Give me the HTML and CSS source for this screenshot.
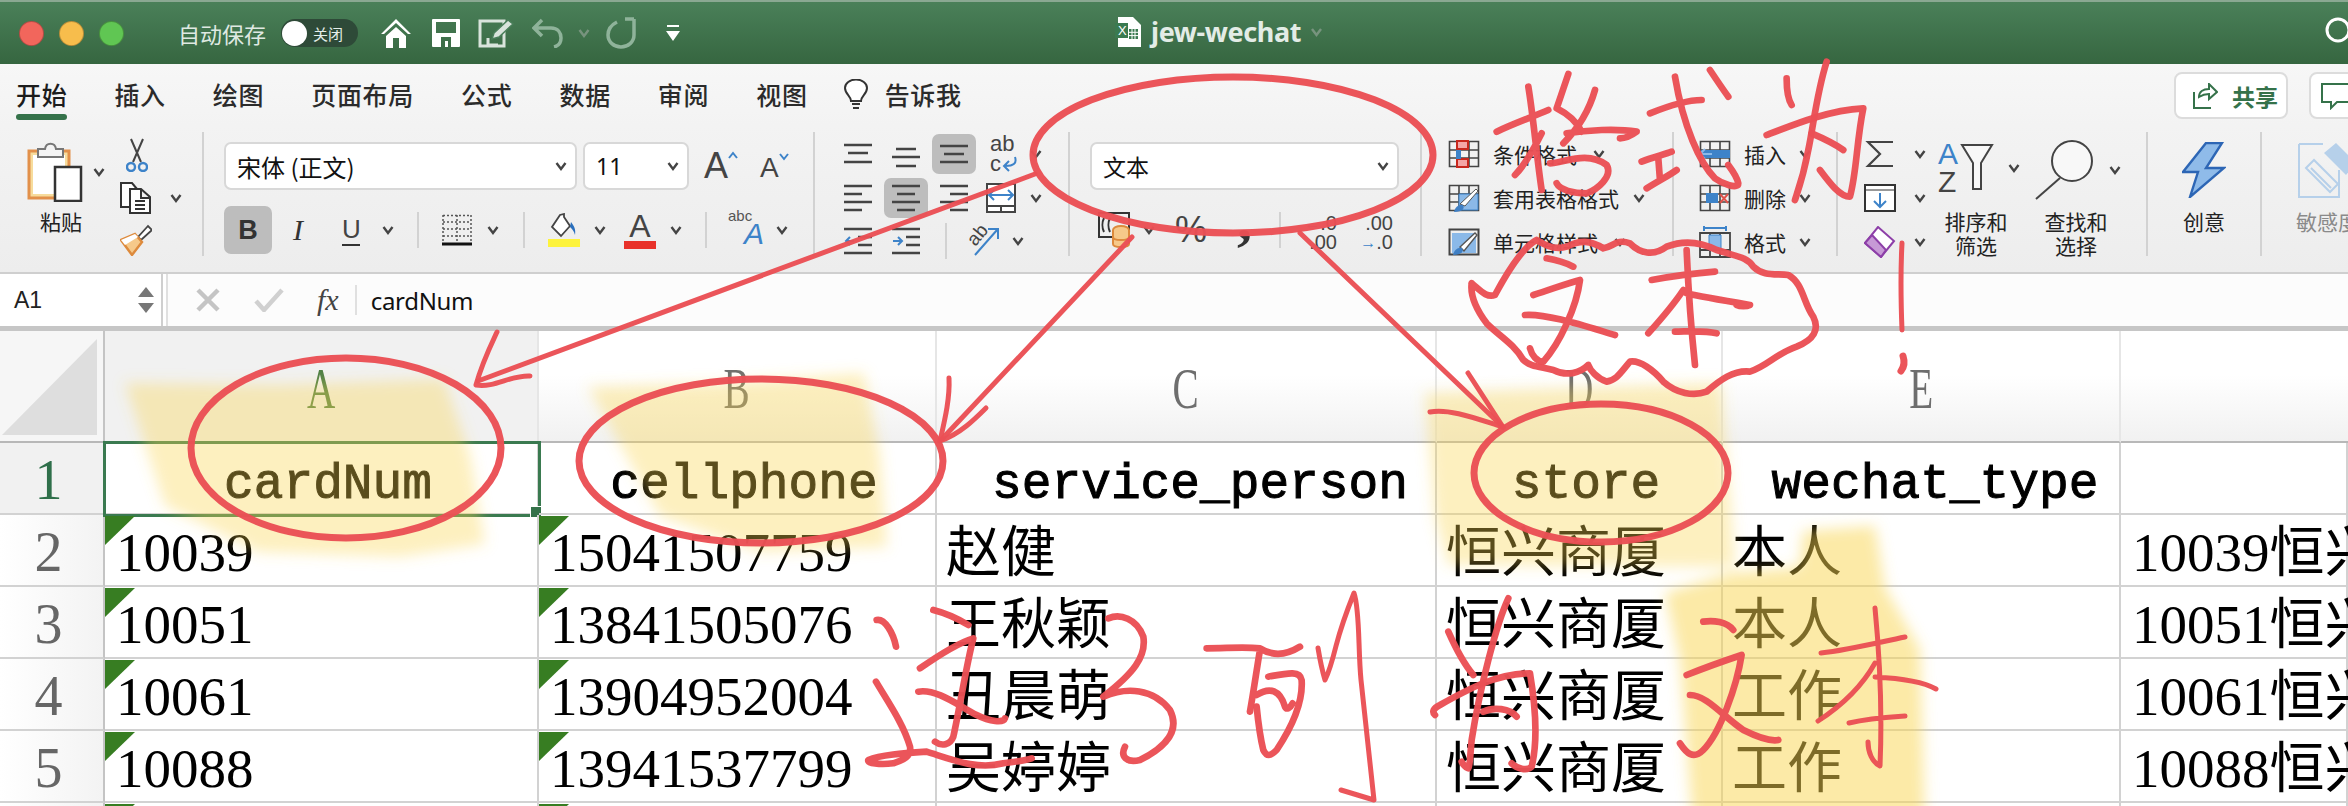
FILE: index.html
```html
<!DOCTYPE html>
<html lang="zh-CN">

<head>
    <meta charset="UTF-8">
    <title>jew-wechat</title>
    <link rel="stylesheet" href="styles.css">
</head>

<body>
    <svg class="defs" width="0" height="0">
        <symbol id="chev" viewBox="0 0 12 10"><path d="M1.5 2 6 8l4.5-6" fill="none" stroke="#444" stroke-width="2.4" /></symbol>
        <symbol id="tbl" viewBox="0 0 32 28">
            <path d="M1.5 1.5h29v25h-29zM1.5 10h29M1.5 18h29M11 1.5v25M21 1.5v25" fill="none" stroke="#444" stroke-width="1.6" />
        </symbol>
        <symbol id="brush" viewBox="0 0 32 28">
            <path d="M1.5 1.5h29v25h-29z" fill="none" stroke="#444" stroke-width="2" />
            <path d="M4 5h24v20H4z" fill="#8bb9e8" />
            <path d="M12 19 27 5l2 2-13 16z" fill="#fff" stroke="#555" stroke-width="1.4" />
            <path d="M5 27c1-5 5-8 9-7 2 3 0 7-9 7z" fill="#3f7fc4" />
        </symbol>
    </svg>

    <header class="titlebar">
        <div class="lights">
            <span class="light red"></span>
            <span class="light amber"></span>
            <span class="light green"></span>
        </div>
        <span class="autosave">自动保存</span>
        <div class="toggle"><span class="knob"></span><span>关闭</span></div>
        <svg class="m22" width="32" height="30" viewBox="0 0 32 30"><path d="M16 1 1 16h3l12-11 12 11h3zM6 18l10-9 10 9v12h-7V20h-6v10H6z" fill="#fff" /></svg>
        <svg class="m20" width="28" height="28" viewBox="0 0 28 28"><path d="M1 0h26a1 1 0 0 1 1 1v26a1 1 0 0 1-1 1H1a1 1 0 0 1-1-1V1a1 1 0 0 1 1-1zm3 3v11h20V3zm5 15v10h10V18zm4 4h3v6h-3z" fill="#fff" fill-rule="evenodd" /></svg>
        <svg class="m18" width="36" height="30" viewBox="0 0 36 30"><path d="M2 3h24v25H2z" fill="none" stroke="#d9e4dc" stroke-width="3" /><path d="M10 20v7h10" fill="none" stroke="#d9e4dc" stroke-width="3" /><path d="m14 21 2-6L30 2l5 4-14 13z" fill="#d9e4dc" stroke="#4a7f5a" stroke-width="1.5" /></svg>
        <svg class="m18" width="32" height="30" viewBox="0 0 32 30"><path d="M10 2 2 10l8 8M3 10h16c7 0 10 5 10 10s-3 8-7 9" fill="none" stroke="#8fb39a" stroke-width="3.5" /></svg>
        <svg class="chev-faded m14" width="12" height="10"><use href="#chev" /></svg>
        <svg class="m16" width="32" height="32" viewBox="0 0 32 32"><path d="M11 5C5 8 2 13 2 18c0 7 6 12 13 12s13-5 13-12V2M28 2h-9" fill="none" stroke="#8fb39a" stroke-width="3.5" /></svg>
        <svg class="m28" width="14" height="20" viewBox="0 0 14 20"><path d="M1 2h12v2H1zM0 8h14l-7 10z" fill="#fff" /></svg>

        <div class="doc-title">
            <svg width="26" height="30" viewBox="0 0 26 30"><path d="M3 0h15l8 8v22H3z" fill="#fff" /><path d="M0 6h13v15H0z" fill="#3a7a50" /><path d="M14 12h9v10h-9z" fill="#3a7a50" /><path d="M17 12v10M20 12v10M14 15.300h9M14 18.600h9" stroke="#fff" /><text class="doc-x" x="3" y="18">X</text></svg>
            <span class="doc-name">jew-wechat</span>
            <svg class="chev-faded" width="15" height="10"><use href="#chev" /></svg>
        </div>
        <svg class="title-search" width="24" height="30" viewBox="0 0 24 30"><circle cx="14" cy="13" r="11" fill="none" stroke="#fff" stroke-width="3" /></svg>
    </header>

    <nav class="tabs">
        <span class="tab active">开始</span>
        <span class="tab">插入</span>
        <span class="tab">绘图</span>
        <span class="tab">页面布局</span>
        <span class="tab">公式</span>
        <span class="tab">数据</span>
        <span class="tab">审阅</span>
        <span class="tab">视图</span>
        <div class="tell">
            <svg width="26" height="32" viewBox="0 0 26 32"><path d="M8 22c0-5-6-7-6-13a11 8.500 0 0 1 22 0c0 6-6 8-6 13zM9 25h8M10 29h6" fill="#fff" stroke="#333" stroke-width="2" /></svg>
            <span class="tab">告诉我</span>
        </div>
        <div class="share-btns">
            <button class="share">
                <svg width="26" height="26" viewBox="0 0 26 26"><path d="M7 14c0-5 4-8 10-8V1l8 8-8 7v-5c-4 0-7 1-10 3zM2 9v16h17" fill="none" stroke="#35724a" stroke-width="2" /></svg>
                <span>共享</span>
            </button>
            <button class="comment">
                <svg width="32" height="28" viewBox="0 0 32 28"><path d="M1 2h30v18H16l-6 6v-6H1z" fill="none" stroke="#35724a" stroke-width="2" /></svg>
            </button>
        </div>
    </nav>

    <section class="ribbon">
        <div class="group clipboard">
            <div class="big paste">
                <div class="big-icon">
                    <svg width="56" height="60" viewBox="0 0 56 60">
                        <path d="M2 9h40v47H2z" fill="#f7dc9c" stroke="#e2904a" stroke-width="3" />
                        <path d="M6 13h32v39H6z" fill="#fff" />
                        <path d="M11 15V7h7c1-7 10-7 11 0h7v8z" fill="#f4f4f4" stroke="#777" stroke-width="2" />
                        <path d="M28 25h26v34H28z" fill="#fff" stroke="#333" stroke-width="2.500" />
                    </svg>
                    <svg class="m10" width="12" height="10"><use href="#chev" /></svg>
                </div>
                <span class="big-label">粘贴</span>
            </div>
            <div class="clip-tools">
                <svg class="m6" width="22" height="34" viewBox="0 0 22 34"><path d="m5 1 10 23M17 1 7 24" stroke="#444" stroke-width="2" fill="none" /><circle cx="5" cy="29" r="4" fill="none" stroke="#3d83c9" stroke-width="2.400" /><circle cx="17" cy="29" r="4" fill="none" stroke="#3d83c9" stroke-width="2.400" /></svg>
                <div class="tool-row">
                    <svg width="32" height="32" viewBox="0 0 32 32"><path d="M9 25H1V1h11l5 6M10 7h11l9 8v16H10zM21 8v8h9M15 19h10M15 23h10M15 27h10" fill="#fff" stroke="#333" stroke-width="2" /></svg>
                    <svg class="m18" width="12" height="10"><use href="#chev" /></svg>
                </div>
                <svg width="32" height="32" viewBox="0 0 32 32"><path d="M18 13 28 2l4 4-11 10z" fill="#fff" stroke="#444" stroke-width="1.800" /><path d="M15 10 22 18 12 31 1 16z" fill="#f6c98a" stroke="#dd8a3c" stroke-width="2.400" /><path d="M1 16 15 10l3 3-13 8z" fill="#fff" /></svg>
            </div>
        </div>

        <div class="group font">
            <div class="row top">
                <div class="select font-name"><span>宋体 (正文)</span><svg width="12" height="10"><use href="#chev" /></svg></div>
                <div class="select font-size"><span>11</span><svg width="12" height="10"><use href="#chev" /></svg></div>
                <div class="grow-a m15"><span>A</span><svg width="10" height="8" viewBox="0 0 10 8"><path d="m1 7 4-5 4 5" fill="none" stroke="#3d83c9" stroke-width="2" /></svg></div>
                <div class="shrink-a m22"><span>A</span><svg width="10" height="8" viewBox="0 0 10 8"><path d="m1 1 4 5 4-5" fill="none" stroke="#3d83c9" stroke-width="2" /></svg></div>
            </div>
            <div class="row bottom">
                <div class="pressed bold">B</div>
                <span class="fmt-i m21">I</span>
                <span class="fmt-u m35">U</span>
                <svg class="m22" width="12" height="10"><use href="#chev" /></svg>
                <i class="vsep m23"></i>
                <svg class="m23" width="30" height="32" viewBox="0 0 30 32"><path d="M1 1.500h28M1 8h28M1 15h28M1 22h28M1 1v26M15 1v26M29 1v26" fill="none" stroke="#555" stroke-width="1.500" stroke-dasharray="2 2" /><path d="M0 30h30" stroke="#111" stroke-width="3" /></svg>
                <svg class="m15" width="12" height="10"><use href="#chev" /></svg>
                <i class="vsep m24"></i>
                <svg class="m23" width="32" height="34" viewBox="0 0 32 34"><path d="M12 2 4 14l9 9 9-10-6-9V1z" fill="#fff" stroke="#444" stroke-width="1.800" /><path d="M23 9c3 4 5 7 4 13-1-4-3-6-5-8z" fill="#2a6fbd" /><path d="M0 26h32v8H0z" fill="#fdf33c" /></svg>
                <svg class="m14" width="12" height="10"><use href="#chev" /></svg>
                <div class="color-a m18"><span>A</span><i></i></div>
                <svg class="m14" width="12" height="10"><use href="#chev" /></svg>
                <i class="vsep m23"></i>
                <div class="abc m23"><span class="abc-small">abc</span><span class="abc-big">A</span></div>
                <svg class="m16" width="12" height="10"><use href="#chev" /></svg>
            </div>
        </div>

        <div class="group align">
            <div class="align-row one">
                <svg width="28" height="22" viewBox="0 0 28 22"><path d="M0 2h28M4 10h20M0 19h28" stroke="#444" stroke-width="2.400" /></svg>
                <svg class="m20 low8" width="28" height="22" viewBox="0 0 28 22"><path d="M4 2h20M0 10h28M4 19h20" stroke="#444" stroke-width="2.400" /></svg>
                <div class="pressed align-on m12"><svg width="28" height="20" viewBox="0 0 28 20"><path d="M0 2h28M4 10h20M0 18h28" stroke="#444" stroke-width="2.400" /></svg></div>
                <div class="wrap-ab m14">
                    <span>ab</span>
                    <span class="wrap-c">c<svg width="16" height="16" viewBox="0 0 16 16"><path d="M14 1c2 6-1 9-10 9M8 5l-5 5 5 5" fill="none" stroke="#3d83c9" stroke-width="2" /></svg></span>
                </div>
                <svg class="m10" width="12" height="10"><use href="#chev" /></svg>
            </div>
            <div class="align-row two">
                <svg width="28" height="28" viewBox="0 0 28 28"><path d="M0 2h28M0 10h18M0 18h28M0 26h18" stroke="#444" stroke-width="2.400" /></svg>
                <div class="pressed align-on m12"><svg width="28" height="28" viewBox="0 0 28 28"><path d="M0 2h28M5 10h18M0 18h28M5 26h18" stroke="#444" stroke-width="2.400" /></svg></div>
                <svg class="m12" width="28" height="28" viewBox="0 0 28 28"><path d="M0 2h28M10 10h18M0 18h28M10 26h18" stroke="#444" stroke-width="2.400" /></svg>
                <svg class="m18" width="30" height="30" viewBox="0 0 30 30"><path d="M1 1h28v28H1zM1 23h28M15 23v6" fill="#fff" stroke="#444" stroke-width="2" /><path d="M3 12h24M8 7l-5 5 5 5M22 7l5 5-5 5" fill="none" stroke="#3d83c9" stroke-width="2" /></svg>
                <svg class="m14" width="12" height="10"><use href="#chev" /></svg>
            </div>
            <div class="align-row three">
                <svg width="28" height="28" viewBox="0 0 28 28"><path d="M0 2h28M14 10h14M14 18h14M0 26h28" stroke="#444" stroke-width="2.400" /><path d="M10 14H2M6 10l-4 4 4 4" fill="none" stroke="#3d83c9" stroke-width="2" /></svg>
                <svg class="m20" width="28" height="28" viewBox="0 0 28 28"><path d="M0 2h28M14 10h14M14 18h14M0 26h28" stroke="#444" stroke-width="2.400" /><path d="M1 14h9M6 10l4 4-4 4" fill="none" stroke="#3d83c9" stroke-width="2" /></svg>
                <i class="vsep m25"></i>
                <div class="orient m20"><span>ab</span><svg width="34" height="30" viewBox="0 0 34 30"><path d="M8 29 30 4M21 3h10v10" fill="none" stroke="#3d83c9" stroke-width="2" /></svg></div>
                <svg class="m11" width="12" height="10"><use href="#chev" /></svg>
            </div>
        </div>

        <div class="group number">
            <div class="row top">
                <div class="select num-format"><span>文本</span><svg width="12" height="10"><use href="#chev" /></svg></div>
            </div>
            <div class="row num-tools">
                <svg class="m8" width="34" height="36" viewBox="0 0 34 36"><path d="M1 1h30v24H1zM6 6c-2 4-2 10 0 14M12 6c-2 4-2 10 0 14" fill="none" stroke="#333" stroke-width="2" /><ellipse cx="23" cy="18" rx="8" ry="4" fill="#f6c98a" stroke="#dd8a3c" stroke-width="2" /><path d="M15 18v14c0 4 16 4 16 0V18M15 25c0 4 16 4 16 0" fill="#f6c98a" stroke="#dd8a3c" stroke-width="2" /></svg>
                <svg class="m11" width="12" height="10"><use href="#chev" /></svg>
                <span class="pct m20">%</span>
                <span class="comma">,</span>
                <i class="vsep"></i>
                <div class="dec-btn first"><span class="dec-top"><b>←</b>.0</span><span class="dec-side">.00</span></div>
                <div class="dec-btn"><span class="dec-side">.00</span><span class="dec-top"><b>→</b>.0</span></div>
            </div>
        </div>

        <div class="group styles">
            <div class="list-row">
                <svg width="32" height="28" viewBox="0 0 32 28"><use href="#tbl" /><path d="M9 1h11v8H9zM9 19h11v8H9z" fill="#f4a6a6" stroke="#c8281e" stroke-width="2" /><path d="M8 10h5v9H8z" fill="#3d83c9" /></svg>
                <span class="list-text">条件格式</span>
                <svg class="m15" width="14" height="10"><use href="#chev" /></svg>
            </div>
            <div class="list-row">
                <svg width="32" height="28" viewBox="0 0 32 28"><use href="#tbl" /><path d="M11 10h19v16H11z" fill="#8bb9e8" stroke="#3d83c9" /><path d="M12 20 28 5l2 2-13 15z" fill="#fff" stroke="#555" /><path d="M6 28c1-5 5-8 9-7 2 3 0 7-9 7z" fill="#3f7fc4" /></svg>
                <span class="list-text">套用表格格式</span>
                <svg class="m13" width="14" height="10"><use href="#chev" /></svg>
            </div>
            <div class="list-row">
                <svg width="32" height="28"><use href="#brush" /></svg>
                <span class="list-text">单元格样式</span>
                <svg class="m15" width="14" height="10"><use href="#chev" /></svg>
            </div>
        </div>

        <div class="group cells">
            <div class="list-row">
                <svg width="32" height="28" viewBox="0 0 32 28"><use href="#tbl" /><path d="M2 10h29v8H2z" fill="#3d83c9" /><path d="M13 14H2M6 9l-5 5 5 5" fill="none" stroke="#8bb9e8" stroke-width="2" /></svg>
                <span class="list-text">插入</span>
                <svg class="m13" width="12" height="10"><use href="#chev" /></svg>
            </div>
            <div class="list-row">
                <svg width="32" height="28" viewBox="0 0 32 28"><use href="#tbl" /><path d="M7 9h12v10H7z" fill="#3d83c9" /><path d="m21 10 8 9m0-9-8 9" stroke="#e0524a" stroke-width="2" /></svg>
                <span class="list-text">删除</span>
                <svg class="m13" width="12" height="10"><use href="#chev" /></svg>
            </div>
            <div class="list-row">
                <svg width="32" height="32" viewBox="0 0 32 32"><path d="M1 7h30v24H1zM1 24h30M11 7v24M21 7v24" fill="none" stroke="#444" stroke-width="1.800" /><path d="M10 9h12v15H10z" fill="#8bb9e8" stroke="#3d83c9" /><path d="M5 2h22M5 0v5M27 0v5" fill="none" stroke="#3d83c9" stroke-width="2" /></svg>
                <span class="list-text">格式</span>
                <svg class="m13" width="12" height="10"><use href="#chev" /></svg>
            </div>
        </div>

        <div class="group editing">
            <div class="edit-list">
                <div class="edit-row">
                    <svg width="32" height="28" viewBox="0 0 32 28"><path d="M29 2H4l12 12L4 26h25" fill="none" stroke="#444" stroke-width="2.200" /></svg>
                    <svg class="m18" width="12" height="10"><use href="#chev" /></svg>
                </div>
                <div class="edit-row">
                    <svg width="32" height="28" viewBox="0 0 32 28"><path d="M1 1h30v26H1z" fill="#fff" stroke="#333" stroke-width="2" /><path d="M1 6h30" stroke="#333" /><path d="M16 9v14M10 17l6 6 6-6" fill="none" stroke="#3d83c9" stroke-width="2" /></svg>
                    <svg class="m18" width="12" height="10"><use href="#chev" /></svg>
                </div>
                <div class="edit-row">
                    <svg width="32" height="32" viewBox="0 0 32 32"><path d="M14 1 30 15 17 31 1 17z" fill="#fff" stroke="#8d3fa8" stroke-width="2" /><path d="m8 9 14 15-5 7L1 17z" fill="#c79ad6" stroke="#8d3fa8" stroke-width="2" /></svg>
                    <svg class="m18" width="12" height="10"><use href="#chev" /></svg>
                </div>
            </div>
            <div class="big sort">
                <div class="big-icon">
                    <div class="sort-letters"><span class="sort-a">A</span><span>Z</span></div>
                    <svg width="34" height="50" viewBox="0 0 34 50"><path d="M2 2h30L21 20v26h-8V20z" fill="#f8f8f8" stroke="#444" stroke-width="2" /></svg>
                    <svg class="m14" width="12" height="10"><use href="#chev" /></svg>
                </div>
                <span class="big-label">排序和<br>筛选</span>
            </div>
            <div class="big find">
                <div class="big-icon">
                    <svg width="60" height="60" viewBox="0 0 60 60"><circle cx="37" cy="21" r="20" fill="#f8f8f8" stroke="#444" stroke-width="2" /><path d="M25 38 1 59" stroke="#444" stroke-width="2" /></svg>
                    <svg class="m14" width="12" height="10"><use href="#chev" /></svg>
                </div>
                <span class="big-label">查找和<br>选择</span>
            </div>
        </div>

        <div class="group ideas">
            <div class="big">
                <svg width="44" height="56" viewBox="0 0 44 56"><path d="M24 1h16L24 26h18L8 55l8-25H1z" fill="#8fbbe9" stroke="#2d66b5" stroke-width="2.400" /></svg>
                <span class="big-label">创意</span>
            </div>
        </div>

        <div class="group sensitivity">
            <div class="big">
                <svg width="60" height="56" viewBox="0 0 60 56"><path d="M1 2h24M1 2v53h40V28" fill="none" stroke="#b6d0ea" stroke-width="2" /><path d="m8 26 8-8 24 24-8 8zM13 26l20 20" fill="none" stroke="#b6d0ea" stroke-width="2" /><path d="m26 11 12-10 20 20-10 12z" fill="#b6d0ea" /></svg>
                <span class="big-label muted">敏感度</span>
            </div>
        </div>
    </section>

    <section class="formula-bar">
        <div class="name-box">
            <span>A1</span>
            <div class="spinner"><i class="up"></i><i class="down"></i></div>
        </div>
        <div class="formula-input">
            <svg width="24" height="24" viewBox="0 0 24 24"><path d="m2 2 20 20M22 2 2 22" stroke="#c4c4c4" stroke-width="4.500" /></svg>
            <svg class="m34" width="30" height="24" viewBox="0 0 30 24"><path d="m2 13 8 9L28 2" fill="none" stroke="#d0d0d0" stroke-width="4.500" /></svg>
            <span class="fx">fx</span>
            <i class="fx-sep"></i>
            <span class="formula-text">cardNum</span>
        </div>
    </section>

    <main class="sheet">
        <div class="corner"><i></i></div>
        <div class="col-head on"><span>A</span></div>
        <div class="col-head"><span>B</span></div>
        <div class="col-head"><span>C</span></div>
        <div class="col-head"><span>D</span></div>
        <div class="col-head"><span>E</span></div>
        <div class="col-head last"></div>

        <div class="row-head on">1</div>
        <div class="cell title selected">cardNum</div>
        <div class="cell title">cellphone</div>
        <div class="cell title wide">service_person</div>
        <div class="cell title">store</div>
        <div class="cell title wide">wechat_type</div>
        <div class="cell"></div>

        <div class="row-head">2</div>
        <div class="cell flag">10039</div>
        <div class="cell flag">15041507759</div>
        <div class="cell cn">赵健</div>
        <div class="cell cn">恒兴商厦</div>
        <div class="cell cn">本人</div>
        <div class="cell">10039恒兴商厦</div>

        <div class="row-head">3</div>
        <div class="cell flag">10051</div>
        <div class="cell flag">13841505076</div>
        <div class="cell cn">王秋颖</div>
        <div class="cell cn">恒兴商厦</div>
        <div class="cell cn">本人</div>
        <div class="cell">10051恒兴商厦</div>

        <div class="row-head">4</div>
        <div class="cell flag">10061</div>
        <div class="cell flag">13904952004</div>
        <div class="cell cn">丑晨萌</div>
        <div class="cell cn">恒兴商厦</div>
        <div class="cell cn">工作</div>
        <div class="cell">10061恒兴商厦</div>

        <div class="row-head">5</div>
        <div class="cell flag">10088</div>
        <div class="cell flag">13941537799</div>
        <div class="cell cn">吴婷婷</div>
        <div class="cell cn">恒兴商厦</div>
        <div class="cell cn">工作</div>
        <div class="cell">10088恒兴商厦</div>

        <div class="row-head"></div>
        <div class="cell flag"></div>
        <div class="cell flag"></div>
        <div class="cell"></div>
        <div class="cell"></div>
        <div class="cell"></div>
        <div class="cell"></div>
    </main>

    <!-- marker and pen annotations on top of the window -->
    <svg class="marks" width="2348" height="806" viewBox="0 0 2348 806">
        <defs>
            <filter id="soft" x="-10%" y="-10%" width="120%" height="120%"><feGaussianBlur stdDeviation="7" /></filter>
        </defs>
        <g class="marker" filter="url(#soft)">
            <path d="M125 383 280 385 444 379 470 455 485 544 400 557 258 552 165 506z" />
            <path d="M588 387 720 383 864 373 880 455 887 547 760 552 660 516z" />
            <path d="M1425 393 1600 387 1721 383 1731 506 1735 567 1448 565 1435 516z" />
            <path class="strong" d="M1803 531 1875 526 1885 588 1920 649 1925 826 1693 826 1680 660 1665 593 1730 573 1800 567z" />
        </g>

        <g class="pen">
            <ellipse cx="1233" cy="155" rx="200" ry="78" />
            <ellipse cx="346" cy="448" rx="155" ry="90" />
            <ellipse cx="761" cy="461" rx="182" ry="82" />
            <ellipse cx="1601" cy="473" rx="127" ry="69" />

            <path class="thin" d="M1035 174 478 381" />
            <path class="thin" d="M497 332C490 347 482 363 476 385 495 388 510 375 530 376" />
            <path class="thin" d="M1132 237 942 439" />
            <path class="thin" d="M949 378C950 398 945 419 940 441 960 434 975 419 986 408" />
            <path class="thin" d="M1300 233 1503 427" />
            <path class="thin" d="M1468 373 1503 427C1480 420 1450 408 1430 412" />

            <path class="thin" d="M1902 243C1900 280 1901 305 1902 330" />
            <path d="M1903 356C1905 362 1904 367 1901 371" />
            <path class="thin" d="M1318 648C1320 660 1322 670 1325 680 1330 670 1333 658 1336 646 1342 623 1348 608 1354 593 1360 610 1358 650 1361 680L1374 800 1341 790" />
            <path class="thin" d="M1821 653C1850 650 1880 642 1905 637M1875 608C1880 660 1882 720 1880 766 1872 762 1868 752 1868 742M1875 663C1860 690 1835 710 1818 721M1875 677C1895 678 1920 680 1936 689M1849 723C1870 718 1890 717 1905 716" />

            <g transform="translate(1400 50) scale(.3333)" class="pen-big">
                <!-- 格 -->
                <path d="M290 245C340 220 400 200 445 180M385 110C400 200 410 320 425 420M425 250C400 300 370 350 345 375" />
                <path d="M505 72 470 175C490 185 525 205 545 245M585 120C565 190 530 240 490 280M500 250C560 240 650 235 710 245 690 260 670 265 660 265" />
                <path d="M450 340C490 340 560 300 620 345 640 380 590 420 560 430 520 430 480 420 470 400" />
                <!-- 式 -->
                <path d="M750 190C800 170 860 150 905 150M825 80C850 230 900 340 945 385 965 400 1015 420 1015 400 1012 385 1000 365 985 345M930 60C950 90 970 120 985 140" />
                <path d="M725 335C760 320 790 315 815 305M775 325 780 390M740 415C780 390 810 375 830 360" />
                <!-- 为 -->
                <path d="M1160 85C1160 120 1165 150 1175 165M1280 35C1250 130 1240 230 1225 300 1210 380 1195 420 1185 450" />
                <path d="M1100 255C1190 220 1290 180 1390 175 1370 270 1370 370 1350 440 1320 440 1290 400 1260 360M1235 250C1270 265 1310 285 1330 300" />
                <!-- 云框 -->
                <path d="M215 700C240 720 260 745 285 735 320 670 370 590 410 570 440 590 470 600 500 590 540 570 570 570 610 595 640 590 650 565 690 580 720 610 760 620 800 590 850 570 900 575 950 600 1010 620 1040 620 1060 650 1090 680 1130 670 1165 675 1210 700 1210 760 1240 800 1260 840 1240 870 1190 890 1130 910 1100 950 1050 965 1000 960 960 990 920 1025 880 1040 830 1030 790 995 760 960 720 930 690 935 660 970 650 990 620 995 590 985 570 960 565 945 540 970 500 980 460 960 420 950 390 950 370 930 340 880 300 860 260 820 230 780 210 740 215 700" />
                <!-- 文 -->
                <path d="M440 625C470 630 500 640 520 650M400 735C450 720 500 700 540 690 530 770 480 880 430 935 410 935 395 915 390 895M375 795C440 790 560 830 645 855" />
                <!-- 本 -->
                <path d="M755 690C810 680 880 670 945 665M860 600C865 720 875 850 885 945M860 730C900 740 960 750 1050 765 1040 770 1020 770 1010 765M745 850C790 800 830 750 850 720M825 845C860 845 910 840 950 850" />
            </g>

            <g transform="translate(860 580) scale(.3333)" class="pen-big">
                <!-- 这 -->
                <path d="M50 120C75 115 100 160 108 200M220 90C260 100 300 120 325 135M180 265C230 230 290 190 340 175 320 250 300 380 280 470 270 495 245 500 225 485M175 335C230 325 300 380 350 405 390 425 430 430 435 415" />
                <path d="M48 305C80 360 130 430 150 500 155 530 130 540 100 550 60 555 20 550 25 540 60 525 130 520 200 515 280 540 350 570 430 550 470 545 500 540 515 535" />
                <!-- 3 -->
                <path d="M745 115C780 100 830 115 850 170 860 230 820 280 730 350 800 320 880 325 930 390 960 450 920 500 840 540 800 550 780 530 795 500" />
                <!-- 列 -->
                <path d="M1040 205C1100 205 1150 200 1200 205 1240 230 1280 225 1320 200M1200 210C1190 270 1180 340 1170 395M1190 345C1230 320 1260 330 1275 380 1280 390 1290 385 1298 370" />
                <path d="M1225 290C1280 280 1320 270 1325 300 1330 370 1290 450 1250 510 1230 530 1220 530 1210 510 1200 470 1195 430 1190 380" />
            </g>

            <g transform="translate(1380 580) scale(.3333)" class="pen-big">
                <!-- 为 -->
                <path d="M205 155C225 200 250 250 280 285M385 55C350 130 300 320 275 480 270 530 270 560 265 565 255 560 250 555 245 545" />
                <path d="M165 405C155 395 160 385 180 375 260 330 350 280 450 280 470 400 470 500 455 560 440 575 410 565 395 550M310 395C340 380 390 385 410 410" />
                <!-- 文 -->
                <path d="M970 125C1000 120 1040 125 1060 150M920 285C970 265 1040 240 1085 225 1070 320 1020 460 970 510 940 540 920 520 900 490M930 345C980 345 1030 410 1090 450 1130 470 1170 485 1195 480" />
            </g>
        </g>
    </svg>
</body>

</html>
```

FILE: styles.css
```css
* {
    box-sizing: border-box;
}

html,
body {
    margin: 0;
    padding: 0;
}

body {
    position: relative;
    width: 2348px;
    height: 806px;
    overflow: hidden;
    font-family: 'Noto Sans', 'Noto Sans CJK SC', sans-serif;
    color: #222;
    background-color: #fff;
}

i {
    display: block;
    font-style: normal;
}

svg {
    display: block;
    flex: none;
}

.defs {
    position: absolute;
}

/* spacing steps used inside the ribbon rows */
.m6 { margin-left: 6px; }
.m8 { margin-left: 8px; }
.m10 { margin-left: 10px; }
.m11 { margin-left: 11px; }
.m12 { margin-left: 12px; }
.m13 { margin-left: 13px; }
.m14 { margin-left: 14px; }
.m15 { margin-left: 15px; }
.m16 { margin-left: 16px; }
.m18 { margin-left: 18px; }
.m20 { margin-left: 20px; }
.m21 { margin-left: 21px; }
.m22 { margin-left: 22px; }
.m23 { margin-left: 23px; }
.m24 { margin-left: 24px; }
.m25 { margin-left: 25px; }
.m28 { margin-left: 28px; }
.m34 { margin-left: 34px; }
.m35 { margin-left: 35px; }

/* title bar */
.titlebar {
    position: relative;
    display: flex;
    align-items: center;
    height: 64px;
    padding-left: 19px;
    border-top: 2px solid #8aa892;
    background: linear-gradient(#4a8059, #366640);
    color: #fff;
}

.lights {
    display: flex;
    gap: 15px;
}

.light {
    width: 25px;
    height: 25px;
    border-radius: 50%;
    border: 1px solid rgba(0, 0, 0, .25);
}

.red { background-color: #f2665c; }
.amber { background-color: #f7bd4c; }
.green { background-color: #60c653; }

.autosave {
    margin-left: 54px;
    font-size: 22px;
    color: #dfe9e2;
}

.toggle {
    display: flex;
    align-items: center;
    gap: 6px;
    width: 77px;
    height: 28px;
    margin-left: 15px;
    padding-left: 1px;
    border-radius: 14px;
    background-color: #2e4a38;
    font-size: 15px;
    color: #e6eee9;
}

.knob {
    width: 25px;
    height: 25px;
    border-radius: 50%;
    background-color: #fff;
}

.chev-faded {
    opacity: .45;
    filter: invert(1);
}

.doc-title {
    position: absolute;
    top: 15px;
    left: 1115px;
    display: flex;
    align-items: center;
}

.doc-x {
    font: 13px 'Liberation Sans', sans-serif;
    fill: #fff;
}

.doc-name {
    margin: 0 8px 0 10px;
    font-size: 27px;
    font-weight: 700;
    line-height: 30px;
    letter-spacing: -.4px;
    color: #e3ece6;
}

.title-search {
    position: absolute;
    top: 15px;
    right: 0;
}

/* tabs */
.tabs {
    display: flex;
    align-items: flex-start;
    gap: 47px;
    height: 61px;
    padding: 15px 0 0 16px;
    background: linear-gradient(#f7f7f7, #f3f3f3);
}

.tab {
    font-size: 25px;
    font-weight: 500;
    line-height: 32px;
    letter-spacing: .7px;
    color: #2b2b2b;
    white-space: nowrap;
}

.tab.active {
    position: relative;
    color: #1c1c1c;
}

.tab.active::after {
    content: "";
    position: absolute;
    left: 0;
    right: 0;
    top: 35px;
    height: 6px;
    border-radius: 3px;
    background-color: #35724a;
}

.tell {
    display: flex;
    align-items: center;
    gap: 16px;
    margin-left: -12px;
}

.share-btns {
    display: flex;
    gap: 21px;
    margin-left: auto;
    margin-top: -7px;
}

.share,
.comment {
    display: flex;
    align-items: center;
    height: 47px;
    border: 2px solid #dcdcdc;
    border-radius: 8px;
    background-color: #fff;
    padding: 0;
}

.share {
    gap: 14px;
    width: 114px;
    padding-left: 16px;
    font-family: 'Noto Sans CJK SC', sans-serif;
    font-size: 23px;
    font-weight: 700;
    color: #35724a;
}

.comment {
    width: 60px;
    margin-right: -21px;
    padding-left: 10px;
}

/* ribbon */
.ribbon {
    display: flex;
    height: 149px;
    padding-top: 7px;
    background: linear-gradient(#f3f3f3, #ededed);
    border-bottom: 2px solid #cfcfcf;
}

.group {
    display: flex;
    flex: none;
    height: 124px;
    border-right: 2px solid #d2d2d2;
}

.clipboard { width: 204px; padding-left: 27px; }
.font { width: 611px; padding-left: 20px; flex-direction: column; }
.align { width: 255px; padding-left: 29px; flex-direction: column; }
.number { width: 352px; padding-left: 20px; flex-direction: column; }
.styles { width: 252px; padding: 8px 0 0 26px; flex-direction: column; gap: 16px; }
.cells { width: 164px; padding: 8px 0 0 25px; flex-direction: column; gap: 16px; }
.editing { width: 310px; padding: 8px 0 0 26px; }
.ideas { width: 114px; justify-content: center; }
.sensitivity { flex: 1; border-right: none; padding-left: 34px; }

.row {
    display: flex;
    align-items: center;
}

.row.top {
    height: 48px;
    margin-top: 10px;
}

.row.bottom {
    height: 48px;
    margin-top: 16px;
}

.num-tools {
    height: 40px;
    margin-top: 20px;
}

.select {
    display: flex;
    align-items: center;
    justify-content: space-between;
    height: 48px;
    padding: 0 8px 0 11px;
    border: 2px solid #d8d8d8;
    border-radius: 7px;
    background-color: #fff;
    font-size: 23px;
    color: #111;
}

.font-name { width: 353px; font-family: 'Noto Sans CJK SC', sans-serif; font-size: 24px; margin-right: 6px; }
.font-size { width: 106px; }
.num-format { width: 309px; font-family: 'Noto Sans CJK SC', sans-serif; }

.grow-a,
.shrink-a {
    display: flex;
    align-items: flex-start;
    font-family: 'Liberation Sans', sans-serif;
    color: #444;
    line-height: 30px;
}

.grow-a { font-size: 36px; }
.shrink-a { font-size: 28px; padding-top: 4px; }

.pressed {
    display: flex;
    align-items: center;
    justify-content: center;
    border-radius: 7px;
    background-color: #bdbdbd;
}

.bold {
    width: 48px;
    height: 48px;
    font-family: 'Liberation Sans', sans-serif;
    font-size: 27px;
    font-weight: 700;
    color: #333;
}

.fmt-i {
    width: 14px;
    font: italic 30px 'Liberation Serif', serif;
    color: #333;
}

.fmt-u {
    width: 18px;
    font-family: 'Liberation Sans', sans-serif;
    font-size: 26px;
    line-height: 30px;
    color: #444;
    border-bottom: 2px solid #333;
}

.vsep {
    width: 2px;
    height: 36px;
    background-color: #d2d2d2;
}

.color-a {
    width: 32px;
    text-align: center;
    font-family: 'Liberation Sans', sans-serif;
    font-size: 32px;
    line-height: 30px;
    color: #444;
}

.color-a i {
    height: 8px;
    background-color: #e8322a;
}

.abc {
    position: relative;
    width: 30px;
    height: 34px;
}

.abc-small {
    position: absolute;
    top: -6px;
    left: -2px;
    font-family: 'Liberation Sans', sans-serif;
    font-size: 15px;
    color: #555;
}

.abc-big {
    position: absolute;
    top: 6px;
    left: 14px;
    font: italic 30px/30px 'Liberation Sans', sans-serif;
    color: #3d83c9;
}

.align-row {
    display: flex;
    align-items: center;
}

.align-row.one { height: 40px; margin-top: 2px; }
.align-row.two { height: 40px; margin-top: 4px; }
.align-row.three { height: 30px; margin-top: 8px; }

.low8 {
    margin-top: 8px;
}

.align-on {
    width: 44px;
    height: 40px;
}

.wrap-ab {
    display: flex;
    flex-direction: column;
    width: 30px;
    font-family: 'Liberation Sans', sans-serif;
    font-size: 22px;
    line-height: 20px;
    color: #444;
}

.wrap-c {
    display: flex;
    align-items: center;
}

.orient {
    position: relative;
    width: 34px;
    height: 30px;
}

.orient span {
    position: absolute;
    top: -2px;
    left: 0;
    font-family: 'Liberation Sans', sans-serif;
    font-size: 19px;
    color: #444;
    transform: rotate(-50deg);
}

.pct {
    width: 32px;
    font-family: 'Liberation Sans', sans-serif;
    font-size: 36px;
    font-weight: 300;
    color: #444;
}

.comma {
    width: 16px;
    margin: -22px 0 0 30px;
    font: 700 60px/30px 'Liberation Serif', serif;
    color: #333;
}

.num-tools .vsep {
    margin-left: 26px;
}

.dec-btn {
    display: flex;
    flex-direction: column;
    align-items: flex-end;
    width: 36px;
    margin: 6px 0 0 20px;
    font-family: 'Liberation Sans', sans-serif;
    font-size: 20px;
    line-height: 19px;
    color: #444;
}

.dec-btn.first {
    margin-left: 20px;
}

.dec-top {
    display: flex;
}

.dec-top b {
    font-size: 16px;
    font-weight: 400;
    color: #3d83c9;
}

.list-row {
    display: flex;
    align-items: center;
    height: 28px;
}

.list-text {
    margin-left: 13px;
    font-family: 'Noto Sans CJK SC', sans-serif;
    font-size: 21px;
    line-height: 28px;
    color: #222;
    white-space: nowrap;
}

.edit-list {
    display: flex;
    flex-direction: column;
    gap: 16px;
}

.edit-row {
    display: flex;
    align-items: center;
    height: 28px;
}

.big {
    display: flex;
    flex-direction: column;
    align-items: center;
}

.big-icon {
    display: flex;
    align-items: center;
}

.big-label {
    margin-top: 11px;
    font-family: 'Noto Sans CJK SC', sans-serif;
    font-size: 21px;
    line-height: 24px;
    text-align: center;
    color: #222;
    white-space: nowrap;
}

.paste { margin-top: 10px; width: 78px; align-items: flex-start; }
.paste .big-label { margin: 7px 0 0 13px; }

.clip-tools {
    display: flex;
    flex-direction: column;
    gap: 10px;
    margin-left: 15px;
    padding-top: 6px;
}

.tool-row {
    display: flex;
    align-items: center;
}

.sort { margin-left: 12px; width: 76px; }
.sort .big-icon { align-self: flex-start; }
.find { margin-left: 21px; width: 82px; }
.find .big-icon { align-self: flex-start; }
.sort .big-label { margin-top: 13px; }
.find .big-label { margin-top: 9px; }

.sort-letters {
    display: flex;
    flex-direction: column;
    width: 22px;
    font-family: 'Liberation Sans', sans-serif;
    font-size: 30px;
    line-height: 28px;
    color: #444;
}

.sort-a {
    color: #3d83c9;
}

.ideas .big,
.sensitivity .big {
    margin-top: 10px;
}

.muted {
    color: #8a8a8a;
}

/* formula bar */
.formula-bar {
    display: flex;
    height: 57px;
    background-color: #fff;
    border-bottom: 5px solid #c6c6c6;
}

.name-box {
    display: flex;
    align-items: center;
    justify-content: space-between;
    width: 163px;
    padding: 0 7px 0 14px;
    border-right: 2px solid #cfcfcf;
    font-family: 'Liberation Sans', sans-serif;
    font-size: 23px;
}

.spinner i {
    width: 0;
    height: 0;
    margin: 6px 0;
    border-left: 8px solid transparent;
    border-right: 8px solid transparent;
}

.spinner .up { border-bottom: 10px solid #777; }
.spinner .down { border-top: 10px solid #777; }

.formula-input {
    display: flex;
    align-items: center;
    flex: 1;
    margin-left: 3px;
    padding-left: 28px;
    border-left: 2px solid #e0e0e0;
    background-color: #fcfcfc;
}

.fx {
    margin-left: 33px;
    font: italic 30px 'Liberation Serif', serif;
    color: #444;
}

.fx-sep {
    width: 2px;
    height: 30px;
    margin-left: 16px;
    background-color: #e0e0e0;
}

.formula-text {
    margin-left: 14px;
    font-size: 24px;
    letter-spacing: -.3px;
    color: #111;
}

/* sheet */
.sheet {
    display: grid;
    grid-template-columns: 105px 434px 398px 500px 286px 398px 227px;
    grid-template-rows: 112px 72px 72px 72px 72px 72px;
    height: 475px;
    overflow: hidden;
    font-family: 'Liberation Serif', 'Noto Sans CJK SC', serif;
    font-size: 55px;
}

.corner {
    padding: 8px 6px 6px 2px;
    background-color: #f6f6f6;
    border-right: 2px solid #c4c4c4;
    border-bottom: 2px solid #b8b8b8;
}

.corner i {
    height: 100%;
    background-color: #dedede;
    clip-path: polygon(100% 0, 100% 100%, 0 100%);
}

.col-head {
    display: flex;
    align-items: flex-end;
    justify-content: center;
    padding-bottom: 30px;
    font-size: 56px;
    line-height: 44px;
    color: #6e6e6e;
    background: linear-gradient(#fff, #fff 40%, #f1f1f1);
    border-right: 2px solid #e6e6e6;
    border-bottom: 2px solid #b8b8b8;
}

.col-head span {
    display: block;
    transform: scaleX(.7);
}

.col-head.on {
    color: #4f8046;
    background: #f1f1f1;
}

.col-head.last {
    border-right: none;
}

.row-head {
    display: flex;
    justify-content: center;
    padding: 7px 6px 0 0;
    font-size: 56px;
    line-height: 60px;
    color: #666;
    background: linear-gradient(90deg, #fff, #f3f3f3);
    border-right: 2px solid #c4c4c4;
    border-bottom: 2px solid #d2d2d2;
}

.row-head.on {
    color: #2f6f4a;
    background: #f1f1f1;
}

.cell {
    position: relative;
    padding: 8px 0 0 11px;
    line-height: 60px;
    color: #000;
    white-space: nowrap;
    border-right: 2px solid #d2d2d2;
    border-bottom: 2px solid #d2d2d2;
}

.cell.cn {
    padding-left: 9px;
}

.cell.title {
    padding: 12px 0 0 14px;
    text-align: center;
    font-family: 'Liberation Mono', monospace;
    font-size: 49.500px;
    -webkit-text-stroke: 1px #000;
}

.cell.wide {
    padding-left: 28px;
}

.flag::before {
    content: "";
    position: absolute;
    top: 1px;
    left: 0;
    width: 30px;
    height: 29px;
    background-color: #377d22;
    clip-path: polygon(0 0, 100% 0, 0 100%);
}

.selected {
    outline: 3px solid #3a7a50;
    outline-offset: -1px;
}

.selected::after {
    content: "";
    position: absolute;
    right: -5px;
    bottom: -5px;
    width: 10px;
    height: 10px;
    background-color: #35724a;
    border: 1px solid #fff;
}

/* annotations */
.marks {
    position: absolute;
    top: 0;
    left: 0;
    pointer-events: none;
}

.marker path {
    fill: rgb(250, 214, 78);
    fill-opacity: .36;
}

.marker .strong {
    fill-opacity: .5;
}

.pen,
.pen-big path {
    fill: none;
    stroke: #ea4f55;
    stroke-opacity: .97;
    stroke-width: 7;
    stroke-linecap: round;
    stroke-linejoin: round;
}

.pen .thin {
    stroke-width: 5;
}

.pen-big path {
    stroke-width: 20;
}
```
